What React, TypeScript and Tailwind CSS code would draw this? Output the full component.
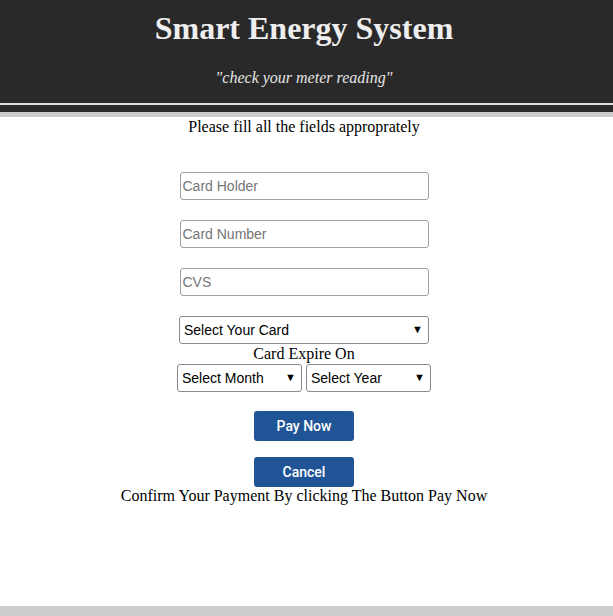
import { useState } from "react"

const serif = "font-['Liberation_Serif','Times_New_Roman',serif]"
const sans = "font-['Liberation_Sans',Arial,sans-serif]"

function TextField({ placeholder }: { placeholder: string }) {
  return (
    <input
      type="text"
      placeholder={placeholder}
      className={`${sans} block w-[249px] h-[28px] px-[2px] text-[14px] text-black border border-[#a0a0a0] rounded-[3px] bg-white outline-none placeholder:text-[#757575]`}
    />
  )
}

function Dropdown({ label, width }: { label: string; width: string }) {
  return (
    <div className={`relative ${width} h-[28px] border border-[#8a8a8a] rounded-[3px] bg-white`}>
      <select
        defaultValue=""
        className={`${sans} appearance-none w-full h-full pl-[4px] pr-6 text-[14px] text-black bg-transparent outline-none`}
      >
        <option value="">{label}</option>
      </select>
      <span className="pointer-events-none absolute right-[5px] top-[5px] text-[11px] leading-[14px] text-black">▼</span>
    </div>
  )
}

export default function App() {
  const [paid, setPaid] = useState(false)

  return (
    <div className="min-h-[616px] bg-white flex flex-col">
      <header className="bg-[#292929]">
        <div className="h-[103px] flex flex-col items-center pr-[5px]">
          <h1 className={`${serif} text-[32px] font-bold text-[#eeeeee] mt-[10px] leading-[36px]`}>
            Smart Energy System
          </h1>
          <p className={`${serif} italic text-[16px] text-[#e6e6e6] mt-[23px] leading-[18px]`}>
            "check your meter reading"
          </p>
        </div>
        <div className="h-[2px] bg-[#dcdcdc]"></div>
        <div className="h-[7px] bg-[#292929]"></div>
        <div className="h-[5px] bg-[#cccccc]"></div>
      </header>

      <main className="flex-1 flex flex-col items-center pr-[5px]">
        <p className={`${serif} text-[16px] text-black leading-[18px] mt-[1px]`}>
          Please fill all the fields approprately
        </p>

        <div className="flex flex-col items-center gap-[20px] mt-[36px]">
          <TextField placeholder="Card Holder" />
          <TextField placeholder="Card Number" />
          <TextField placeholder="CVS" />
          <Dropdown label="Select Your Card" width="w-[250px]" />
        </div>

        <p className={`${serif} text-[16px] text-black leading-[18px] mt-[1px]`}>Card Expire On</p>
        <div className="flex gap-[4px] mt-[1px]">
          <Dropdown label="Select Month" width="w-[125px]" />
          <Dropdown label="Select Year" width="w-[125px]" />
        </div>

        <button
          onClick={() => setPaid(true)}
          className="font-['Roboto',Arial,sans-serif] mt-[19px] w-[100px] h-[30px] rounded-[3px] bg-[#1f5596] text-white text-[14px] font-medium"
        >
          Pay Now
        </button>
        <button
          onClick={() => setPaid(false)}
          className="font-['Roboto',Arial,sans-serif] mt-[16px] w-[100px] h-[30px] rounded-[3px] bg-[#1f5596] text-white text-[14px] font-medium"
        >
          Cancel
        </button>
        <p className={`${serif} text-[16px] text-black leading-[18px]`}>
          {paid ? "Confirm Your Payment By clicking The Button Pay Now" : "Confirm Your Payment By clicking The Button Pay Now"}
        </p>
      </main>

      <footer className="h-[10px] bg-[#cccccc]"></footer>
    </div>
  )
}
